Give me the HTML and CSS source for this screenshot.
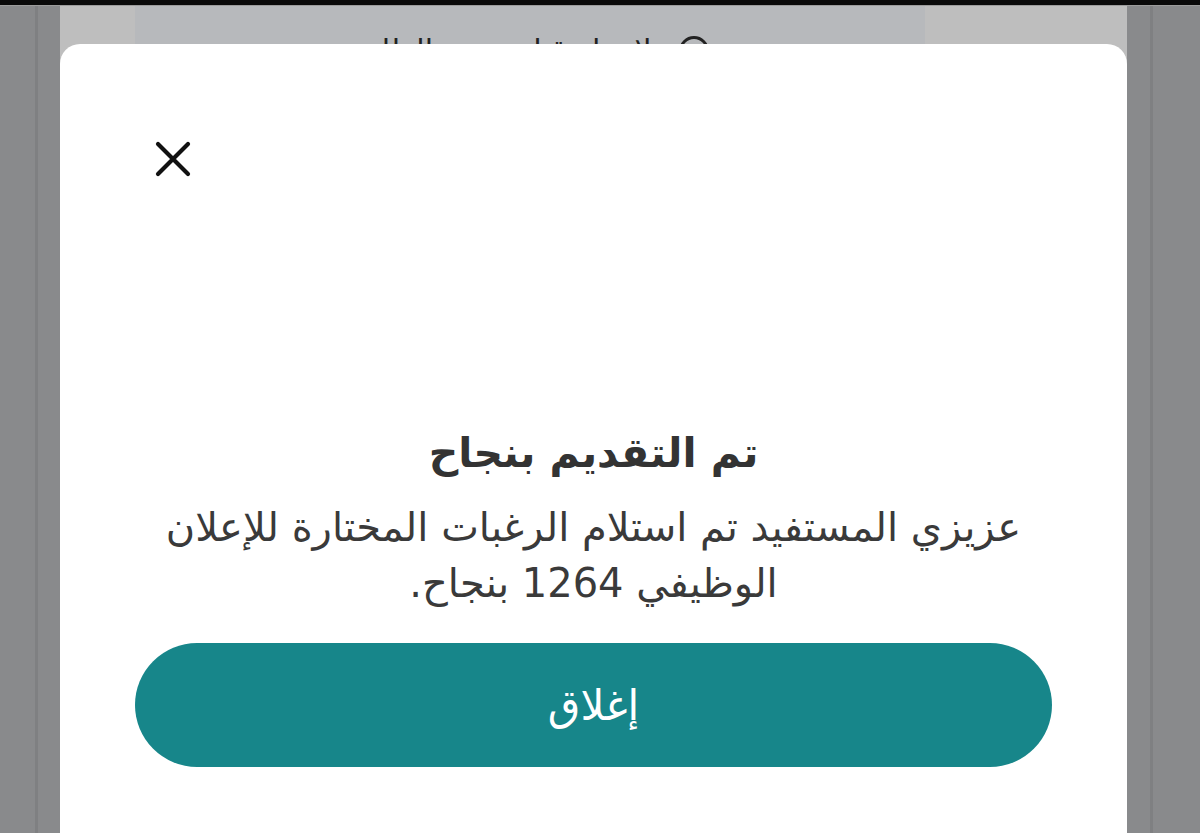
FILE: index.html
```html
<!DOCTYPE html>
<html lang="ar" dir="rtl">
<head>
  <meta charset="UTF-8">
  <meta name="viewport" content="width=device-width, initial-scale=1">
  <title>تم التقديم بنجاح</title>
  <link rel="stylesheet" href="styles.css">
</head>
<body>

<div class="topbar"></div>

<!-- الصفحة خلف النافذة -->
<div class="page" dir="ltr">
  <div class="rail rail-left"><span class="rail-line"></span></div>
  <main class="content">
    <div class="side side-left"></div>
    <div class="card" dir="rtl">
      <p class="card-title">
        <span class="info-icon"></span>
        ملاحظة قبل تقديم الطلب
      </p>
    </div>
    <div class="side side-right"></div>
  </main>
  <div class="rail rail-right"><span class="rail-line"></span></div>
</div>

<!-- نافذة النجاح -->
<div class="overlay">
  <div class="modal">
    <button class="close" aria-label="إغلاق">
      <svg viewBox="0 0 36 36" width="36" height="36">
        <path d="M3 3 L33 33 M33 3 L3 33" stroke="#111" stroke-width="4.2" stroke-linecap="round" fill="none"/>
      </svg>
    </button>
    <h2 class="title">تم التقديم بنجاح</h2>
    <p class="message">عزيزي المستفيد تم استلام الرغبات المختارة للإعلان الوظيفي 1264 بنجاح.</p>
    <button class="btn-close">إغلاق</button>
  </div>
</div>

</body>
</html>
```

FILE: styles.css
```css
html, body {
  margin: 0;
  height: 100%;
  overflow: hidden;
}

body {
  font-family: "DejaVu Sans", sans-serif;
  background: #8a8b8d;
  color: #333;
}

.topbar {
  height: 5px;
  background: #0a0a0a;
  border-bottom: 1px solid #9c9c9c;
}

.page {
  display: flex;
  height: calc(100% - 6px);
}

.rail {
  display: flex;
  flex-shrink: 0;
  background: #898a8c;
}

.rail-left {
  width: 60px;
}

.rail-right {
  width: 73px;
}

.rail-line {
  width: 3px;
  background: #7f8082;
}

.rail-left .rail-line {
  margin-left: 35px;
}

.rail-right .rail-line {
  margin-left: 23px;
}

.content {
  flex: 1;
  min-width: 0;
  display: flex;
  background: #bebebe;
}

.side-left {
  width: 75px;
}

.side-right {
  width: 202px;
}

.card {
  flex: 1;
  background: #b7b9bc;
}

.card-title {
  margin: 27px 0 0;
  text-align: center;
  font-size: 30px;
  color: #222;
  display: flex;
  justify-content: center;
  align-items: center;
  gap: 10px;
}

.info-icon {
  width: 24px;
  height: 24px;
  border: 3px solid #222;
  border-radius: 50%;
}

/* النافذة */
.overlay {
  position: absolute;
  top: 44px;
  left: 60px;
  width: 1067px;
  bottom: -40px;
}

.modal {
  height: 100%;
  background: #fff;
  border-radius: 20px;
  padding: 97px 75px 0;
  box-sizing: border-box;
  display: flex;
  flex-direction: column;
  align-items: center;
}

.close {
  align-self: flex-end;
  background: none;
  border: 0;
  padding: 0;
  margin-left: 20px;
  width: 36px;
  height: 36px;
  cursor: pointer;
}

.title {
  margin: 248px 0 18px;
  font-size: 41px;
  font-weight: bold;
  color: #333;
  line-height: 56px;
}

.message {
  margin: 0;
  font-size: 40px;
  line-height: 56px;
  text-align: center;
  color: #3a3a3a;
}

.btn-close {
  margin-top: 32px;
  width: 100%;
  height: 124px;
  border: 0;
  border-radius: 62px;
  background: #17868a;
  color: #fff;
  font-family: inherit;
  font-size: 42px;
  cursor: pointer;
}
```
